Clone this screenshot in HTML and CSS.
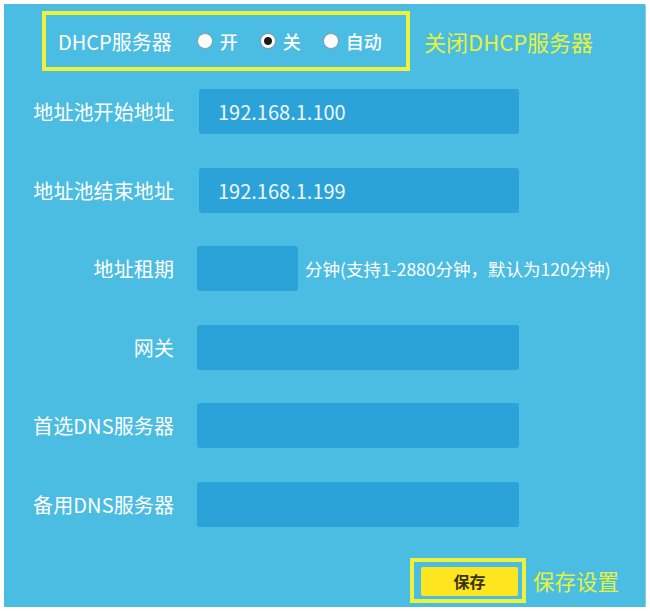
FILE: index.html
```html
<!DOCTYPE html>
<html lang="zh-CN">
<head>
<meta charset="utf-8">
<title>DHCP服务器</title>
<link rel="stylesheet" href="styles.css">
</head>
<body>
<div class="panel">
  <div class="dhcp-line">
    <div class="dhcp-box">
      <span class="dhcp-label">DHCP服务器</span>
      <span class="radio"><span class="dot"></span><span class="rtext">开</span></span>
      <span class="radio"><span class="dot checked"></span><span class="rtext">关</span></span>
      <span class="radio"><span class="dot"></span><span class="rtext">自动</span></span>
    </div>
    <span class="hint hint-top">关闭DHCP服务器</span>
  </div>

  <div class="form">
    <div class="row">
      <span class="label">地址池开始地址</span>
      <div class="input wide shifted">192.168.1.100</div>
    </div>
    <div class="row">
      <span class="label">地址池结束地址</span>
      <div class="input wide shifted">192.168.1.199</div>
    </div>
    <div class="row">
      <span class="label">地址租期</span>
      <div class="input short"></div>
      <span class="note">分钟(支持1-2880分钟，默认为120分钟)</span>
    </div>
    <div class="row">
      <span class="label">网关</span>
      <div class="input wide"></div>
    </div>
    <div class="row">
      <span class="label">首选DNS服务器</span>
      <div class="input wide"></div>
    </div>
    <div class="row">
      <span class="label">备用DNS服务器</span>
      <div class="input wide"></div>
    </div>
  </div>

  <div class="save-line">
    <div class="save-box"><div class="save-btn">保存</div></div>
    <span class="hint hint-save">保存设置</span>
  </div>
</div>
</body>
</html>
```

FILE: styles.css
```css
html, body {
  margin: 0;
  padding: 0;
  background: #ffffff;
}

body {
  font-family: "Noto Sans CJK SC", "Noto Sans", "Liberation Sans", sans-serif;
  color: #ffffff;
}

.panel {
  margin: 4px 0 0 4px;
  width: 641px;
  height: 603px;
  box-sizing: border-box;
  background: #4bbde2;
  box-shadow: 1px 1px 0 #8fc9dc;
  padding-top: 7px;
}

.dhcp-line {
  display: flex;
  align-items: center;
  padding-left: 38px;
  white-space: nowrap;
}

.dhcp-box {
  display: flex;
  align-items: center;
  flex-shrink: 0;
  box-sizing: border-box;
  width: 368px;
  height: 60px;
  border: 4px solid #eef23a;
  padding-left: 12px;
  white-space: nowrap;
}

.dhcp-label {
  flex-shrink: 0;
  font-size: 20px;
  margin-right: 25px;
}

.radio {
  display: flex;
  align-items: center;
  flex-shrink: 0;
  margin-right: 22px;
}

.dot {
  flex-shrink: 0;
  width: 16px;
  height: 16px;
  box-sizing: border-box;
  border-radius: 50%;
  background: #ffffff;
  border: 1.5px solid #8a9aa2;
  margin-right: 7px;
}

.dot.checked {
  background: radial-gradient(circle, #1a1a1a 0 3.5px, #ffffff 4.5px);
}

.rtext {
  font-size: 18px;
  font-weight: 500;
}

.hint {
  color: #e4f23c;
  font-size: 22px;
  white-space: nowrap;
}

.hint-top {
  margin-left: 14px;
}

.form {
  display: flex;
  flex-direction: column;
  gap: 33.5px;
  margin-top: 18px;
}

.row {
  display: flex;
  align-items: center;
  height: 45px;
}

.label {
  flex-shrink: 0;
  width: 170px;
  text-align: right;
  font-size: 20px;
  margin-right: 23px;
  letter-spacing: 0.1px;
  white-space: nowrap;
}

.input {
  flex-shrink: 0;
  height: 45px;
  box-sizing: border-box;
  background: #2ba3d8;
  border-radius: 3px;
  color: #eef8fc;
  font-size: 20px;
  display: flex;
  align-items: center;
  padding-left: 19px;
}

.input.wide {
  width: 322px;
}

.input.shifted {
  margin-left: 2px;
  width: 320px;
}

.input.short {
  width: 101px;
}

.note {
  font-size: 17.5px;
  margin-left: 7px;
  white-space: nowrap;
}

.save-line {
  display: flex;
  align-items: center;
  margin-top: 31px;
  padding-left: 406px;
}

.save-box {
  flex-shrink: 0;
  box-sizing: border-box;
  width: 116px;
  height: 45px;
  border: 4px solid #eef23a;
  padding: 5px 4px 3px 7px;
}

.save-btn {
  height: 100%;
  background: #fde51f;
  border-radius: 2px;
  color: #3a3410;
  font-size: 16px;
  font-weight: 700;
  display: flex;
  align-items: center;
  justify-content: center;
}

.hint-save {
  margin-left: 7px;
  font-size: 21.5px;
}
```
